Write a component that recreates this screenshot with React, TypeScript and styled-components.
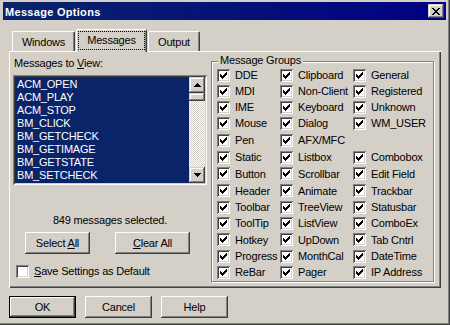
import React from "react"
import styled, { createGlobalStyle } from "styled-components"

const GlobalStyle = createGlobalStyle`
  html, body { margin: 0; padding: 0; background: #d4d0c8; }
  body {
    font-family: "Liberation Sans", Arial, sans-serif;
    font-size: 11px;
    letter-spacing: -0.2px;
    color: #000;
  }
`

const face = "#d4d0c8"

const Window = styled.div`
  width: 450px;
  height: 325px;
  box-sizing: border-box;
  background: ${face};
  padding: 2px 4px 4px 3px;
  box-shadow: inset -1px -1px #404040, inset -2px -2px #808080;
  display: flex;
  flex-direction: column;
  overflow: hidden;
`

const TitleBar = styled.div`
  height: 18px;
  display: flex;
  align-items: center;
  justify-content: space-between;
  padding: 0 2px;
  background: linear-gradient(90deg, #0a246a, #000084);
  color: #fff;
  font-weight: bold;
`

const Title = styled.span`
  letter-spacing: 0.3px;
  padding-top: 1px;
`

const CloseButton = styled.div`
  width: 16px;
  height: 14px;
  background: ${face};
  box-shadow: inset -1px -1px #404040, inset 1px 1px ${face}, inset -2px -2px #808080, inset 2px 2px #fff;
  display: flex;
  align-items: center;
  justify-content: center;
  padding-right: 1px;
  box-sizing: border-box;
`

const TabStrip = styled.div`
  margin: 9px 0 0 6px;
  height: 22px;
  padding-left: 3px;
  display: flex;
  align-items: flex-end;
`

const Tab = styled.div<{ $active?: boolean; $w: number }>`
  position: relative;
  z-index: ${(p) => (p.$active ? 2 : 1)};
  width: ${(p) => p.$w}px;
  height: ${(p) => (p.$active ? 23 : 20)}px;
  margin-bottom: ${(p) => (p.$active ? -1 : 0)}px;
  & + & { margin-left: 1px; }
  box-sizing: border-box;
  background: ${face};
  border-top: 1px solid #fff;
  border-left: 1px solid #fff;
  border-right: 1px solid #404040;
  border-radius: 2px 2px 0 0;
  box-shadow: inset -1px 0 #808080;
  display: flex;
  align-items: center;
  justify-content: center;
  padding-bottom: ${(p) => (p.$active ? 2 : 0)}px;
`

const FocusRect = styled.span`
  position: absolute;
  top: 1px;
  left: 1px;
  right: 1px;
  bottom: 2px;
  border: 1px dotted #000;
`

const Panel = styled.div`
  position: relative;
  z-index: 0;
  margin-left: 6px;
  width: 432px;
  height: 237px;
  box-sizing: border-box;
  box-shadow: inset 1px 1px #fff, inset -1px -1px #404040, inset -2px -2px #808080;
  padding: 6px 0 0 4px;
  display: flex;
  gap: 4px;
`

const LeftColumn = styled.div`
  width: 194px;
  display: flex;
  flex-direction: column;
`

const FieldLabel = styled.div`
  line-height: 13px;
  padding-left: 1px;
`

const ListBox = styled.div`
  margin-top: 5px;
  width: 194px;
  height: 110px;
  box-sizing: border-box;
  padding: 2px;
  background: #0a246a;
  box-shadow: inset 1px 1px #808080, inset -1px -1px #fff, inset 2px 2px #404040, inset -2px -2px ${face};
  display: flex;
`

const ListItems = styled.div`
  flex: 1;
  padding: 1px 0 0 2px;
  overflow: hidden;
`

const ListItem = styled.div`
  line-height: 13px;
  height: 13px;
  color: #fff;
  white-space: nowrap;
`

const ScrollBar = styled.div`
  width: 16px;
  display: flex;
  flex-direction: column;
`

const ScrollButton = styled.div<{ $h: number }>`
  height: ${(p) => p.$h}px;
  background: ${face};
  box-shadow: inset -1px -1px #404040, inset 1px 1px ${face}, inset -2px -2px #808080, inset 2px 2px #fff;
  display: flex;
  align-items: center;
  justify-content: center;
`

const ScrollTrack = styled.div`
  flex: 1;
  background: repeating-conic-gradient(#fff 0 25%, ${face} 0 50%) 0 0 / 2px 2px;
`

const Status = styled.div`
  margin-top: 29px;
  line-height: 13px;
  text-align: center;
`

const ButtonRow = styled.div`
  margin-top: 5px;
  padding-left: 12px;
  display: flex;
  gap: 25px;
`

const PushButton = styled.button<{ $w: number; $default?: boolean }>`
  width: ${(p) => p.$w}px;
  height: 22px;
  padding: 0;
  margin: 0;
  font: inherit;
  letter-spacing: inherit;
  color: #000;
  background: ${face};
  border: ${(p) => (p.$default ? "1px solid #000" : "none")};
  box-sizing: border-box;
  box-shadow: inset -1px -1px #404040, inset 1px 1px #fff, inset -2px -2px #808080;
  & u { text-decoration: underline; }
`

const CheckRow = styled.div`
  margin-top: 11px;
  padding-left: 3px;
  display: flex;
  align-items: center;
  gap: 5px;
  line-height: 13px;
`

const Box = styled.span`
  width: 13px;
  height: 13px;
  flex: none;
  box-sizing: border-box;
  background: #fff;
  box-shadow: inset 1px 1px #808080, inset -1px -1px #fff, inset 2px 2px #404040, inset -2px -2px ${face};
  display: flex;
  align-items: center;
  justify-content: center;
`

const GroupBox = styled.div`
  position: relative;
  margin-top: 4px;
  width: 223px;
  height: 221px;
  box-sizing: border-box;
  border: 1px solid #808080;
  box-shadow: inset 1px 1px #fff, 1px 1px #fff;
  padding: 5px 0 0 5px;
`

const Legend = styled.span`
  position: absolute;
  top: -8px;
  left: 6px;
  padding: 0 2px;
  line-height: 13px;
  background: ${face};
`

const GroupGrid = styled.div`
  display: grid;
  grid-template-columns: 63px 73px 1fr;
  grid-template-rows: 16px 16px 16px 16px 18px 16px 17px 17px 16px 16px 17px 16px 16px;
`

const GroupCell = styled.div`
  display: flex;
  align-items: center;
  gap: 5px;
  white-space: nowrap;
`

const Footer = styled.div`
  margin: 8px 0 0 6px;
  display: flex;
  gap: 9px;
`

const checkCols = [2, 3, 4, 3, 2, 1, 0]

const CheckMark = () => (
  <svg width="7" height="7" shapeRendering="crispEdges">
    {checkCols.map((y, x) => (
      <rect key={x} x={x} y={y} width="1" height="3" fill="#000" />
    ))}
  </svg>
)

const CheckBox = ({ checked }: { checked?: boolean }) => (
  <Box>{checked && <CheckMark />}</Box>
)

const closeRows: [number, number][][] = [
  [[0, 2], [6, 2]],
  [[1, 2], [5, 2]],
  [[2, 4]],
  [[3, 2]],
  [[2, 4]],
  [[1, 2], [5, 2]],
  [[0, 2], [6, 2]],
]

const CloseGlyph = () => (
  <svg width="8" height="7" shapeRendering="crispEdges">
    {closeRows.map((row, y) =>
      row.map(([x, w]) => <rect key={`${y}-${x}`} x={x} y={y} width={w} height="1" fill="#000" />)
    )}
  </svg>
)

const Arrow = ({ down }: { down?: boolean }) => (
  <svg width="7" height="4" shapeRendering="crispEdges">
    {[0, 1, 2, 3].map((i) => (
      <rect key={i} x={3 - i} y={down ? 3 - i : i} width={i * 2 + 1} height="1" fill="#000" />
    ))}
  </svg>
)

const messages = [
  "ACM_OPEN",
  "ACM_PLAY",
  "ACM_STOP",
  "BM_CLICK",
  "BM_GETCHECK",
  "BM_GETIMAGE",
  "BM_GETSTATE",
  "BM_SETCHECK",
]

const groups: (string | null)[] = [
  "DDE", "Clipboard", "General",
  "MDI", "Non-Client", "Registered",
  "IME", "Keyboard", "Unknown",
  "Mouse", "Dialog", "WM_USER",
  "Pen", "AFX/MFC", null,
  "Static", "Listbox", "Combobox",
  "Button", "Scrollbar", "Edit Field",
  "Header", "Animate", "Trackbar",
  "Toolbar", "TreeView", "Statusbar",
  "ToolTip", "ListView", "ComboEx",
  "Hotkey", "UpDown", "Tab Cntrl",
  "Progress", "MonthCal", "DateTime",
  "ReBar", "Pager", "IP Address",
]

const App = () => {
  return (
    <>
      <GlobalStyle />
      <Window>
        <TitleBar>
          <Title>Message Options</Title>
          <CloseButton>
            <CloseGlyph />
          </CloseButton>
        </TitleBar>

        <TabStrip>
          <Tab $w={63}>Windows</Tab>
          <Tab $w={71} $active>
            Messages
            <FocusRect />
          </Tab>
          <Tab $w={52}>Output</Tab>
        </TabStrip>

        <Panel>
          <LeftColumn>
            <FieldLabel>
              Messages to <u>V</u>iew:
            </FieldLabel>
            <ListBox>
              <ListItems>
                {messages.map((m) => (
                  <ListItem key={m}>{m}</ListItem>
                ))}
              </ListItems>
              <ScrollBar>
                <ScrollButton $h={16}>
                  <Arrow />
                </ScrollButton>
                <ScrollButton $h={8} />
                <ScrollTrack />
                <ScrollButton $h={16}>
                  <Arrow down />
                </ScrollButton>
              </ScrollBar>
            </ListBox>
            <Status>849 messages selected.</Status>
            <ButtonRow>
              <PushButton $w={65}>
                Select <u>A</u>ll
              </PushButton>
              <PushButton $w={75}>
                <u>C</u>lear All
              </PushButton>
            </ButtonRow>
            <CheckRow>
              <CheckBox />
              <span>
                <u>S</u>ave Settings as Default
              </span>
            </CheckRow>
          </LeftColumn>

          <GroupBox>
            <Legend>Message Groups</Legend>
            <GroupGrid>
              {groups.map((g, i) =>
                g ? (
                  <GroupCell key={g}>
                    <CheckBox checked />
                    {g}
                  </GroupCell>
                ) : (
                  <div key={`empty-${i}`} />
                )
              )}
            </GroupGrid>
          </GroupBox>
        </Panel>

        <Footer>
          <PushButton $w={67} $default>
            OK
          </PushButton>
          <PushButton $w={67}>Cancel</PushButton>
          <PushButton $w={67}>Help</PushButton>
        </Footer>
      </Window>
    </>
  )
}

export default App
